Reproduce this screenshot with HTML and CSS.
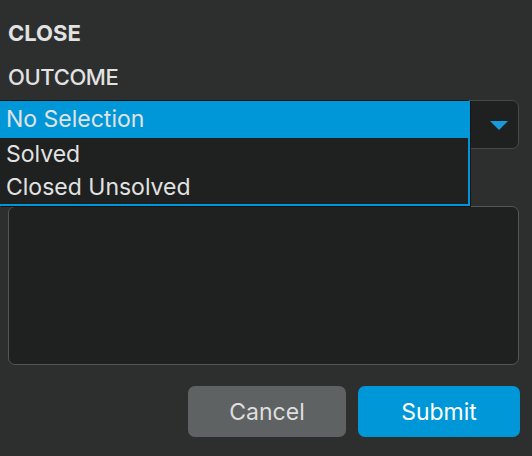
FILE: index.html
```html
<!DOCTYPE html>
<html>
<head>
<meta charset="utf-8">
<link rel="stylesheet" href="styles.css">
</head>
<body>
<div class="panel">
  <div class="title">CLOSE</div>
  <div class="label">OUTCOME</div>
  <div class="select-wrap">
    <div class="select">
      <svg class="arrow" width="18" height="9" viewBox="0 0 18 9"><polygon points="0,0 18,0 9,9" fill="#1a9ad8"/></svg>
    </div>
    <ul class="popup">
      <li class="option selected">No Selection</li>
      <li class="option">Solved</li>
      <li class="option">Closed Unsolved</li>
    </ul>
  </div>
  <div class="textarea"></div>
  <div class="actions">
    <button class="btn cancel">Cancel</button>
    <button class="btn submit">Submit</button>
  </div>
</div>
</body>
</html>
```

FILE: styles.css
```css
html, body {
  margin: 0;
  padding: 0;
  background: #2d2f2f;
  width: 532px;
  height: 456px;
  overflow: hidden;
}
.panel {
  display: flex;
  flex-direction: column;
  padding: 0 13px 0 8px;
  font-family: Inter, Roboto, "Liberation Sans", sans-serif;
  color: #e2e2e2;
}
.title {
  margin-top: 22px;
  font-size: 22px;
  line-height: 22px;
  font-weight: 700;
}
.label {
  margin-top: 22px;
  font-size: 22px;
  line-height: 22px;
  font-weight: 500;
  letter-spacing: -0.4px;
}
.select-wrap {
  position: relative;
  margin-top: 12px;
}
.select {
  height: 49px;
  box-sizing: border-box;
  border: 1px solid #474949;
  border-radius: 7px;
  background: #1f2020;
  display: flex;
  align-items: center;
  justify-content: flex-end;
  padding-right: 10px;
}
.arrow {
  display: block;
  margin-top: 1px;
}
.popup {
  position: absolute;
  left: -8px;
  top: 0;
  width: 470px;
  margin: 0;
  padding: 0;
  list-style: none;
  box-sizing: border-box;
  background: #1f2020;
  border-top: 1px solid #111;
  border-right: 2px solid #0097d8;
  border-bottom: 2px solid #0097d8;
  box-shadow: 1px 1px 0 #111;
}
.option {
  height: 33px;
  line-height: 33px;
  padding-left: 6px;
  font-size: 23px;
  color: #e2e2e2;
}
.option.selected {
  height: 37px;
  line-height: 37px;
  background: #0097d8;
  margin-right: -2px;
}
.textarea {
  margin-top: 57px;
  height: 159px;
  box-sizing: border-box;
  border: 1px solid #545656;
  border-radius: 7px;
  background: #1f2020;
}
.actions {
  margin-top: 21px;
  display: flex;
  justify-content: flex-end;
  gap: 12px;
  margin-right: -1px;
}
.btn {
  height: 51px;
  border: none;
  border-radius: 7px;
  font-family: Inter, Roboto, "Liberation Sans", sans-serif;
  font-size: 23px;
  padding: 0;
}
.cancel {
  width: 158px;
  background: #5f6263;
  color: #dedede;
}
.submit {
  width: 162px;
  background: #0097d8;
  color: #ffffff;
}
```
